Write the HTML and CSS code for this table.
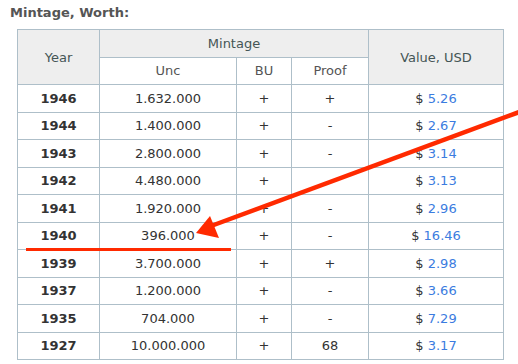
FILE: index.html
```html
<!DOCTYPE html>
<html lang="en">
  <head>
    <meta charset="UTF-8" />
    <title>Mintage, Worth</title>
    <link rel="stylesheet" href="styles.css">
  </head>
  <body>
    <div class="section">
      <h2 class="title">Mintage, Worth:</h2>
      <table class="mintage">
        <colgroup>
          <col class="c-year" />
          <col class="c-unc" />
          <col class="c-bu" />
          <col class="c-proof" />
          <col class="c-value" />
        </colgroup>
        <thead>
          <tr>
            <th rowspan="2">Year</th>
            <th colspan="3">Mintage</th>
            <th rowspan="2">Value, USD</th>
          </tr>
          <tr>
            <th class="sub">Unc</th>
            <th class="sub">BU</th>
            <th class="sub">Proof</th>
          </tr>
        </thead>
        <tbody>
          <tr><td class="year">1946</td><td>1.632.000</td><td>+</td><td>+</td><td>$ <a href="#">5.26</a></td></tr>
          <tr><td class="year">1944</td><td>1.400.000</td><td>+</td><td>-</td><td>$ <a href="#">2.67</a></td></tr>
          <tr><td class="year">1943</td><td>2.800.000</td><td>+</td><td>-</td><td>$ <a href="#">3.14</a></td></tr>
          <tr><td class="year">1942</td><td>4.480.000</td><td>+</td><td>-</td><td>$ <a href="#">3.13</a></td></tr>
          <tr><td class="year">1941</td><td>1.920.000</td><td>+</td><td>-</td><td>$ <a href="#">2.96</a></td></tr>
          <tr><td class="year">1940</td><td>396.000</td><td>+</td><td>-</td><td>$ <a href="#">16.46</a></td></tr>
          <tr><td class="year">1939</td><td>3.700.000</td><td>+</td><td>+</td><td>$ <a href="#">2.98</a></td></tr>
          <tr><td class="year">1937</td><td>1.200.000</td><td>+</td><td>-</td><td>$ <a href="#">3.66</a></td></tr>
          <tr><td class="year">1935</td><td>704.000</td><td>+</td><td>-</td><td>$ <a href="#">7.29</a></td></tr>
          <tr><td class="year">1927</td><td>10.000.000</td><td>+</td><td>68</td><td>$ <a href="#">3.17</a></td></tr>
        </tbody>
      </table>
    </div>

    <!-- annotation drawn over the table -->
    <svg class="markup" width="518" height="364" viewBox="0 0 518 364">
      <line x1="522" y1="111" x2="211" y2="226" stroke="#ff2a00" stroke-width="4.5" />
      <polygon points="196,233 210,216 219,238" fill="#ff2a00" />
      <rect x="26" y="248" width="205" height="3" fill="#ff2a00" />
    </svg>
  </body>
</html>
```

FILE: styles.css
```css
body {
  margin: 0;
  background: #fff;
  font-family: "DejaVu Sans", Verdana, sans-serif;
  color: #333;
}
.section {
  padding: 5px 0 0 10px;
}
.title {
  margin: 0 0 9px 0;
  font-size: 13px;
  line-height: 15px;
  font-weight: bold;
  color: #555;
}
.mintage {
  margin-left: 7px;
  border-collapse: collapse;
  table-layout: fixed;
  width: 486px;
  font-size: 13px;
}
.c-year { width: 82px; }
.c-unc { width: 137px; }
.c-bu { width: 55px; }
.c-proof { width: 77px; }
.c-value { width: 135px; }
.mintage th,
.mintage td {
  border: 1px solid #aebfc9;
  text-align: center;
  padding: 0;
  height: 26.5px;
}
.mintage th {
  background: #eeeeee;
  font-weight: normal;
  color: #455;
}
.mintage th.sub {
  background: #fff;
  color: #555;
}
.mintage td.year {
  font-weight: bold;
}
.mintage a {
  color: #3b7ce0;
  text-decoration: none;
}
.markup {
  position: absolute;
  top: 0;
  left: 0;
  pointer-events: none;
}
```
